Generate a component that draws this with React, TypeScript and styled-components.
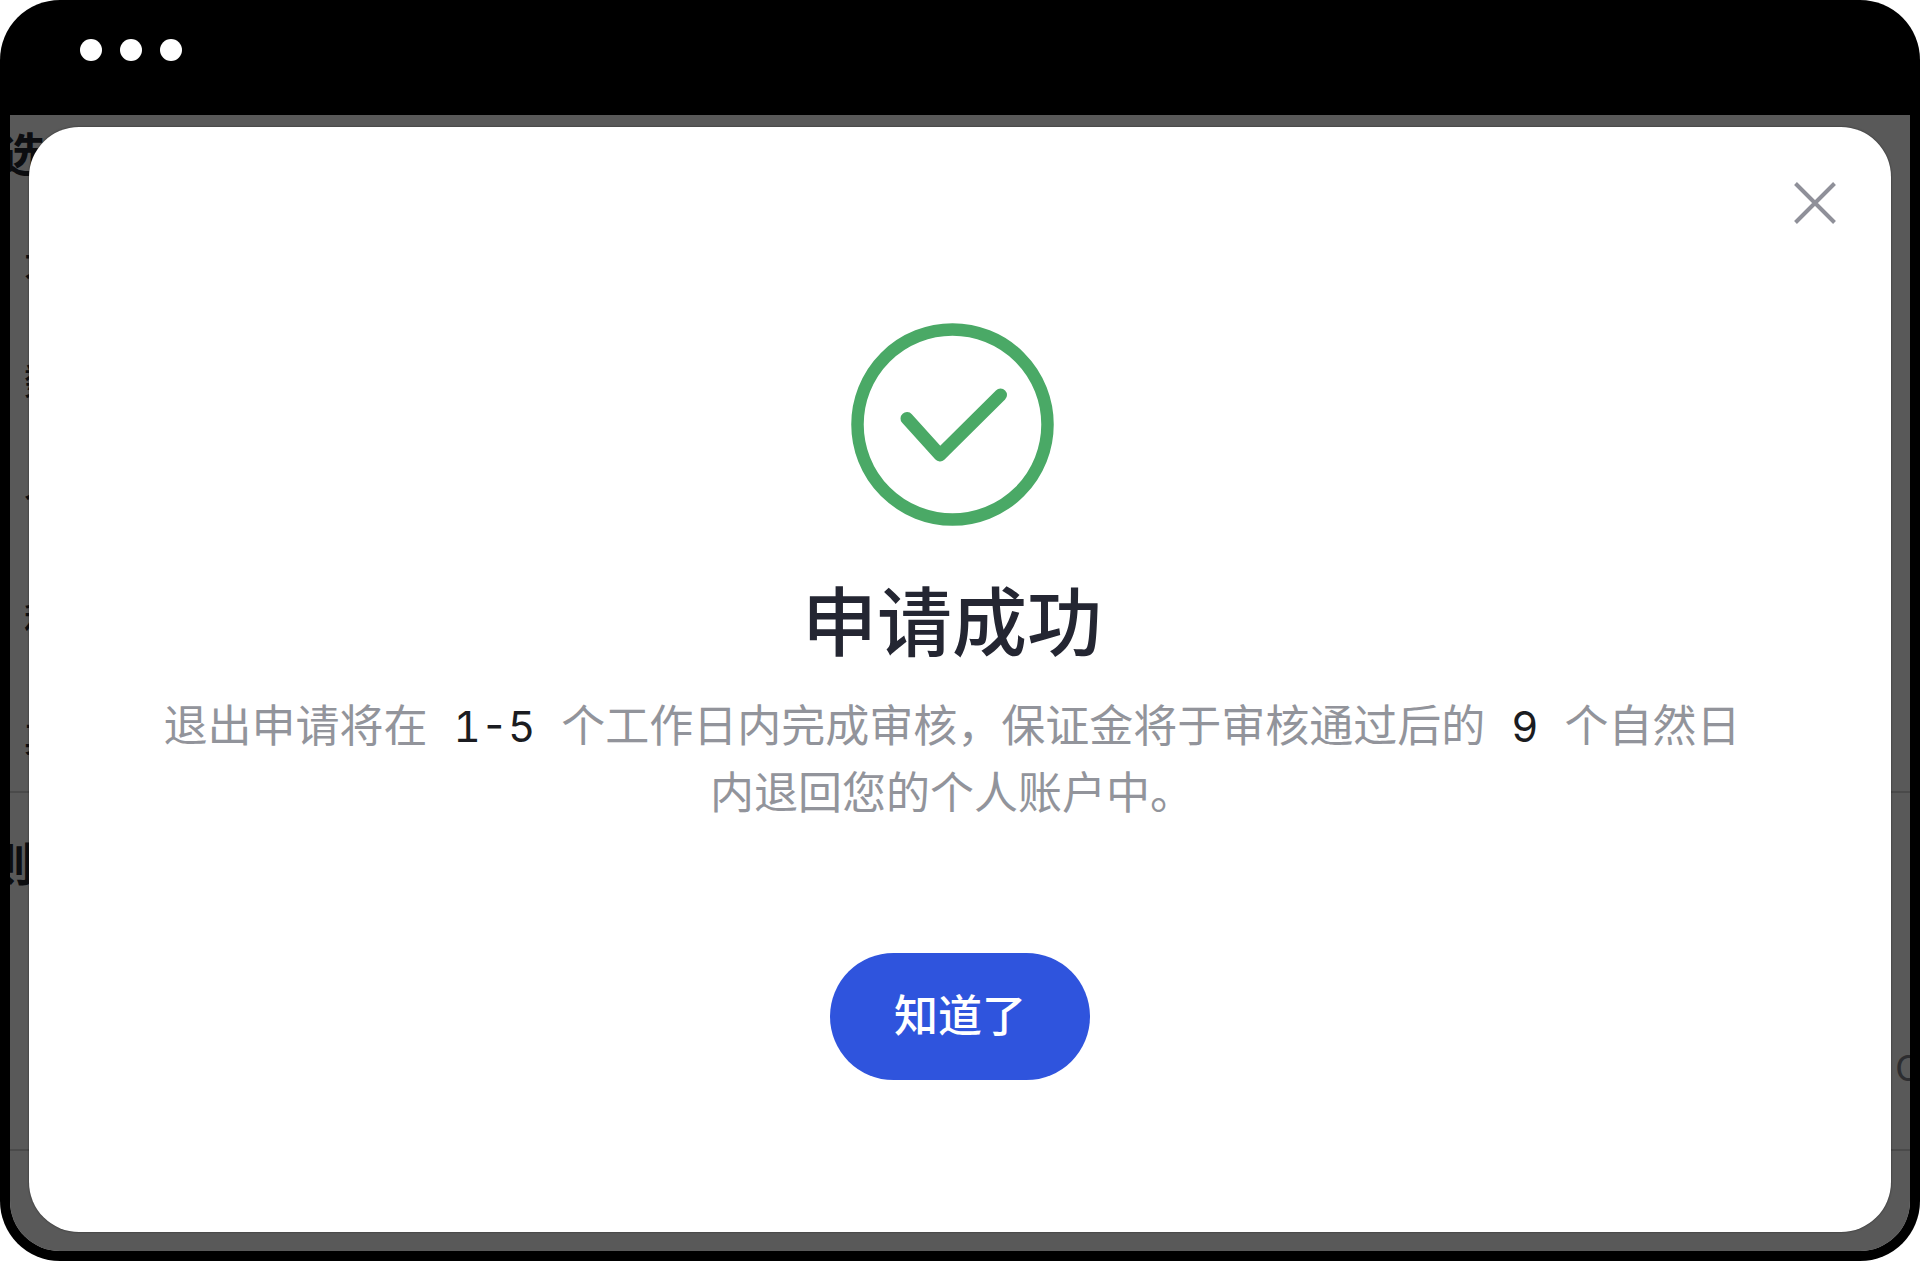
import React from "react";
import styled, { createGlobalStyle } from "styled-components";

const GlobalStyle = createGlobalStyle`
  *, *::before, *::after { box-sizing: border-box; }
  body {
    margin: 0;
    background: #fff;
    font-family: "Noto Sans CJK SC", "Noto Sans", sans-serif;
  }
  h1, p { margin: 0; font-weight: inherit; }
`;

const Frame = styled.div`
  display: flex;
  flex-direction: column;
  min-height: 100vh;
  padding: 0 10px 10px;
  border-radius: 60px;
  background: #000;
`;

const TitleBar = styled.header`
  display: flex;
  align-items: flex-start;
  gap: 18px;
  height: 115px;
  padding: 39px 70px 0;
`;

const Dot = styled.span`
  width: 22px;
  height: 22px;
  border-radius: 50%;
  background: #fff;
`;

const Viewport = styled.main`
  position: relative;
  flex: 1;
  display: flex;
  border-radius: 0 0 50px 50px;
  overflow: hidden;
  background: #fff;
`;

const Page = styled.div`
  position: absolute;
  inset: 0;
  overflow: hidden;
  color: #24262e;
`;

const Section = styled.div<{ $height: number; $top: number }>`
  height: ${(p) => p.$height}px;
  padding-top: ${(p) => p.$top}px;
  border-bottom: 2px solid #d4d4d4;
`;

const PageHeading = styled.div<{ $shift: number }>`
  height: 72px;
  margin-left: -${(p) => p.$shift}px;
  font-size: 46px;
  line-height: 72px;
  font-weight: 700;
`;

const Fields = styled.div`
  padding: 14px 0 0 14px;
`;

const Field = styled.div`
  height: 119px;
  font-size: 36px;
  line-height: 119px;
  font-weight: 500;
`;

const PageValue = styled.div`
  display: flex;
  justify-content: flex-end;
  margin-right: -12px;
  padding-top: 140px;
  font-size: 36px;
  line-height: 56px;
  color: #80828a;
`;

const Backdrop = styled.div`
  position: relative;
  flex: 1;
  display: flex;
  padding: 12px 19px 19px;
  background: rgba(0, 0, 0, 0.65);
`;

const Dialog = styled.section`
  flex: 1;
  display: flex;
  flex-direction: column;
  align-items: center;
  border-radius: 50px;
  background: #fff;
  box-shadow: 0 0 2px rgba(0, 0, 0, 0.6);
`;

const DialogHeader = styled.div`
  align-self: stretch;
  display: flex;
  justify-content: flex-end;
  padding: 44px 44px 0;
`;

const CloseButton = styled.button`
  display: flex;
  align-items: center;
  justify-content: center;
  width: 64px;
  height: 64px;
  padding: 0;
  border: 0;
  background: none;
  cursor: pointer;
`;

const DialogBody = styled.div`
  align-self: stretch;
  flex: 1;
  display: flex;
  flex-direction: column;
  align-items: center;
  padding: 88px 140px 0 124px;
`;

const Title = styled.h1`
  margin-top: 46px;
  font-size: 75px;
  line-height: 92px;
  font-weight: 500;
  color: #242632;
`;

const Message = styled.p`
  margin-top: 26px;
  font-size: 44px;
  line-height: 67px;
  text-align: center;
  color: #92949b;
`;

const Count = styled.span`
  margin: 0 26px;
  font-family: Inter, sans-serif;
  font-size: 42px;
  line-height: 1;
  font-variant-numeric: tabular-nums;
  color: #1b1c21;
`;

const ConfirmButton = styled.button`
  min-width: 260px;
  height: 127px;
  margin-bottom: 152px;
  padding: 0 64px 8px;
  border: 0;
  border-radius: 64px;
  background: #2f54dd;
  font-family: inherit;
  font-size: 44px;
  font-weight: 500;
  color: #fff;
  cursor: pointer;
`;

const fields = ["大", "数", "个", "利", "其"];

export default function App() {
  return (
    <Frame>
      <GlobalStyle />
      <TitleBar>
        <Dot />
        <Dot />
        <Dot />
      </TitleBar>
      <Viewport>
        <Page aria-hidden="true">
          <Section $height={678} $top={0}>
            <PageHeading $shift={10}>选</PageHeading>
            <Fields>
              {fields.map((label) => (
                <Field key={label}>{label}</Field>
              ))}
            </Fields>
          </Section>
          <Section $height={358} $top={32}>
            <PageHeading $shift={22}>则</PageHeading>
            <PageValue>O</PageValue>
          </Section>
        </Page>
        <Backdrop>
          <Dialog role="dialog" aria-modal="true" aria-labelledby="dialog-title">
            <DialogHeader>
              <CloseButton type="button" aria-label="关闭">
                <svg width="42" height="42" viewBox="0 0 42 42" fill="none" stroke="#8f9099" strokeWidth="4">
                  <path d="M1.5 1.5 40.5 40.5M40.5 1.5 1.5 40.5" />
                </svg>
              </CloseButton>
            </DialogHeader>
            <DialogBody>
              <svg width="203" height="203" viewBox="0 0 203 203" fill="none" stroke="#4aa966" aria-hidden="true">
                <circle cx="101.5" cy="101.5" r="95" strokeWidth="12.5" />
                <path d="M56 95.5 89 132 149.5 72" strokeWidth="13" strokeLinecap="round" strokeLinejoin="round" />
              </svg>
              <Title id="dialog-title">申请成功</Title>
              <Message>
                退出申请将在<Count>1-5</Count>个工作日内完成审核，保证金将于审核通过后的<Count>9</Count>
                个自然日内退回您的个人账户中。
              </Message>
            </DialogBody>
            <ConfirmButton type="button">知道了</ConfirmButton>
          </Dialog>
        </Backdrop>
      </Viewport>
    </Frame>
  );
}
